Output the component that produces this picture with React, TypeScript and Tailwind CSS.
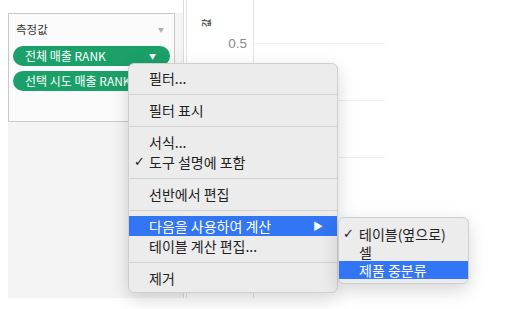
import { Fragment } from 'react';

const kr = { fontFamily: '"Noto Sans CJK KR", "Noto Sans", sans-serif' };

type MenuRow =
  | { kind: 'item'; label: string; checked?: boolean; active?: boolean; sub?: boolean }
  | { kind: 'sep' };

const mainMenu: MenuRow[] = [
  { kind: 'item', label: '필터...' },
  { kind: 'sep' },
  { kind: 'item', label: '필터 표시' },
  { kind: 'sep' },
  { kind: 'item', label: '서식...' },
  { kind: 'item', label: '도구 설명에 포함', checked: true },
  { kind: 'sep' },
  { kind: 'item', label: '선반에서 편집' },
  { kind: 'sep' },
  { kind: 'item', label: '다음을 사용하여 계산', active: true, sub: true },
  { kind: 'item', label: '테이블 계산 편집...' },
  { kind: 'sep' },
  { kind: 'item', label: '제거' },
];

const subMenu = [
  { label: '테이블(옆으로)', checked: true },
  { label: '셀' },
  { label: '제품 중분류', active: true },
];

/**
 * 측정값 카드의 녹색 알약
 */
function Pill({ label }: { label: string }) {
  return (
    <div className="flex h-[20px] items-center justify-between rounded-full bg-[#1ba06a] pl-[12px] pr-[14px] text-[12px] leading-[20px] text-white">
      <span className="whitespace-nowrap overflow-hidden">{label}</span>
      <span className="text-[7px] leading-none">▼</span>
    </div>
  );
}

export default function App() {
  return (
    <div className="relative h-[309px] w-[505px] overflow-hidden bg-white" style={kr}>
      <div className="ml-[8px] flex h-[298px] w-[470px]">
        {/* 선반 영역 */}
        <div className="flex w-[175px] flex-col">
          <div className="h-[13px] bg-white" />
          <div className="flex-1 bg-[#f4f4f4] pr-[8px]">
            <div className="h-[109px] border border-[#c9c9c9] bg-[#fbfbfb] px-[4px]">
              <div className="flex items-center justify-between pl-[3px] pr-[6px] pt-[7px] pb-[8px]">
                <span className="text-[11.5px] text-[#333]">측정값</span>
                <span className="text-[6px] text-[#b0b0b0]">▼</span>
              </div>
              <div className="flex flex-col gap-[5px]">
                <Pill label="전체 매출 RANK" />
                <Pill label="선택 시도 매출 RANK" />
              </div>
            </div>
          </div>
        </div>

        {/* 차트 영역 */}
        <div className="flex flex-1 border-l border-[#dcdcdc] bg-white">
          <div className="ml-[2px] w-[68px] border-l border-r border-[#e4e4e4] pt-[13px]">
            <div className="flex h-[20px] items-center pl-[16px]">
              <span className="-rotate-90 text-[9px] font-bold text-[#555]">값</span>
            </div>
            <div className="flex h-[22px] items-center justify-end pr-[6px]">
              <span className="text-[13.5px] text-[#8a8a8a]" style={{ fontFamily: '"Liberation Sans", sans-serif' }}>
                0.5
              </span>
            </div>
          </div>
          <div className="w-[131px] pt-[43px]">
            <div className="h-px bg-[#eeeeee]" />
            <div className="mt-[56px] h-px bg-[#eeeeee]" />
            <div className="mt-[56px] h-px bg-[#eeeeee]" />
          </div>
        </div>
      </div>

      {/* 컨텍스트 메뉴 */}
      <div className="absolute left-[128px] top-[63px] w-[210px] rounded-[6px] border border-[#cfcfcf] bg-[#ececec] py-[4px] text-[14px] text-[#222] shadow-[0_6px_18px_rgba(0,0,0,0.16)]">
        {mainMenu.map((row, i) =>
          row.kind === 'sep' ? (
            <div key={i} className="flex h-[12px] items-center">
              <div className="h-px w-full bg-[#d2d2d2]" />
            </div>
          ) : (
            <div
              key={i}
              className={`flex h-[20px] items-center pl-[5px] pr-[14px] leading-[20px] ${row.active ? 'bg-[#3275f5] text-white' : ''}`}
            >
              <span className="w-[15px] text-[13px]" style={{ fontFamily: '"DejaVu Sans", sans-serif' }}>
                {row.checked ? '✓' : ''}
              </span>
              <span className="flex-1 whitespace-nowrap">{row.label}</span>
              {row.sub && <span className="text-[10px]">▶</span>}
            </div>
          ),
        )}
      </div>

      {/* 하위 메뉴 */}
      <div className="absolute left-[338px] top-[217px] w-[131px] rounded-[6px] border border-[#cfcfcf] bg-[#ececec] pt-[7px] pb-[4px] text-[14px] text-[#222] shadow-[0_6px_18px_rgba(0,0,0,0.16)]">
        {subMenu.map((it) => (
          <Fragment key={it.label}>
            <div className={`flex h-[18px] items-center pl-[4px] leading-[18px] ${it.active ? 'bg-[#3275f5] text-white' : ''}`}>
              <span className="w-[16px] text-[13px]" style={{ fontFamily: '"DejaVu Sans", sans-serif' }}>
                {it.checked ? '✓' : ''}
              </span>
              <span className="whitespace-nowrap">{it.label}</span>
            </div>
          </Fragment>
        ))}
      </div>
    </div>
  );
}
